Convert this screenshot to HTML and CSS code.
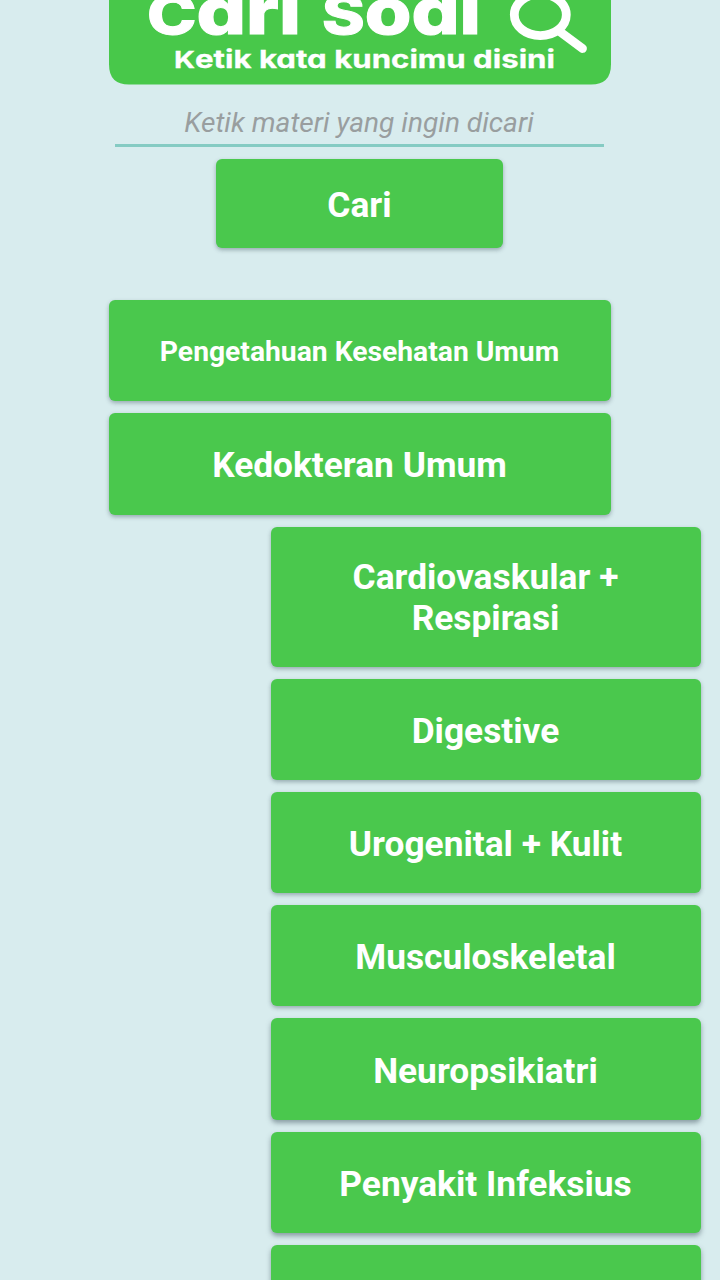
FILE: index.html
```
<!DOCTYPE html>
<html lang="id">
<head>
<meta charset="utf-8">
<title>Cari Soal</title>
<link rel="stylesheet" href="styles.css">
</head>
<body>
<main class="screen">
  <svg class="banner" viewBox="0 0 502 85" role="img" aria-label="Cari Soal">
    <path class="banner-bg" d="M0 0H502V64.500Q502 84.500 482 84.500H20Q0 84.500 0 64.500Z"/>
    <text class="banner-title" x="38" y="34" textLength="154" lengthAdjust="spacingAndGlyphs"><tspan class="cap">C</tspan>ari</text>
    <text class="banner-title" x="213" y="34" textLength="159" lengthAdjust="spacingAndGlyphs"><tspan class="cap">S</tspan>oal</text>
    <text class="banner-sub" x="65" y="68" textLength="381" lengthAdjust="spacingAndGlyphs"><tspan class="sub-cap">K</tspan>etik kata kuncimu disini</text>
    <ellipse class="lens" cx="431.300" cy="14.800" rx="26" ry="20.800"/>
    <path class="lens handle" d="M450 31L473.500 48.500"/>
  </svg>
  <input class="search" type="text" placeholder="Ketik materi yang ingin dicari">
  <button class="btn submit">Cari</button>
  <nav class="menu">
    <button class="btn small">Pengetahuan Kesehatan Umum</button>
    <button class="btn">Kedokteran Umum</button>
    <div class="submenu">
      <button class="btn tall">Cardiovaskular +<br>Respirasi</button>
      <button class="btn">Digestive</button>
      <button class="btn">Urogenital + Kulit</button>
      <button class="btn">Musculoskeletal</button>
      <button class="btn deep">Neuropsikiatri</button>
      <button class="btn deep">Penyakit Infeksius</button>
      <button class="btn deep" aria-label="Menu"></button>
    </div>
  </nav>
</main>
</body>
</html>
```
FILE: styles.css
```
* { box-sizing: border-box; }
body {
  margin: 0;
  background: #d8ecee;
  font-family: Roboto, "Liberation Sans", sans-serif;
}
.screen {
  height: 1280px;
  overflow: hidden;
  display: flex;
  flex-direction: column;
  padding: 0 109.500px 0 108.500px;
}
.banner { width: 502px; height: 85px; flex: none; }
.banner-bg { fill: #48c84a; }
.banner-title, .banner-sub {
  font-family: Inter, "Open Sans", sans-serif;
  font-feature-settings: "cv11";
  fill: #fff;
}
.banner-title { font-size: 63px; font-weight: 800; stroke: #fff; stroke-width: 1px; }
.cap { font-size: 54px; }
.banner-sub { font-size: 24.500px; font-weight: 700; stroke: #fff; stroke-width: .3px; }
.sub-cap { font-size: 23px; }
.lens { fill: none; stroke: #fff; stroke-width: 8.800; }
.handle { stroke-linecap: round; }
.search {
  flex: none;
  height: 62px;
  margin: 0 7px 0 6px;
  padding: 15px 0 0;
  border: 0;
  border-bottom: 3px solid #85cbc3;
  background: none;
  text-align: center;
  font: italic 28.100px Roboto, sans-serif;
}
.search::placeholder { color: #999e9f; opacity: 1; }
.btn {
  flex: none;
  display: block;
  width: 100%;
  height: 101.300px;
  padding: 3px 0 0;
  border: 0;
  border-radius: 6px;
  background: #4ac84d;
  box-shadow: 0 2px 4px rgba(60, 80, 90, .42);
  color: #fff;
  font: bold 35.300px/41px Roboto, "Liberation Sans", sans-serif;
  text-align: center;
}
.submit {
  align-self: center;
  width: 287px;
  height: 88.500px;
  margin: 12.300px 0 52.200px;
}
.menu, .submenu { display: flex; flex-direction: column; gap: 12px; }
.small { font-size: 28.250px; padding-top: 1px; }
.submenu { margin: 0 -90px 0 162px; }
.tall { height: 140px; padding: 2px 0 0; }
.submenu .btn:not(.tall) { padding-top: 4px; }
.deep { box-shadow: 0 3px 5px rgba(60, 80, 90, .5); }
```
